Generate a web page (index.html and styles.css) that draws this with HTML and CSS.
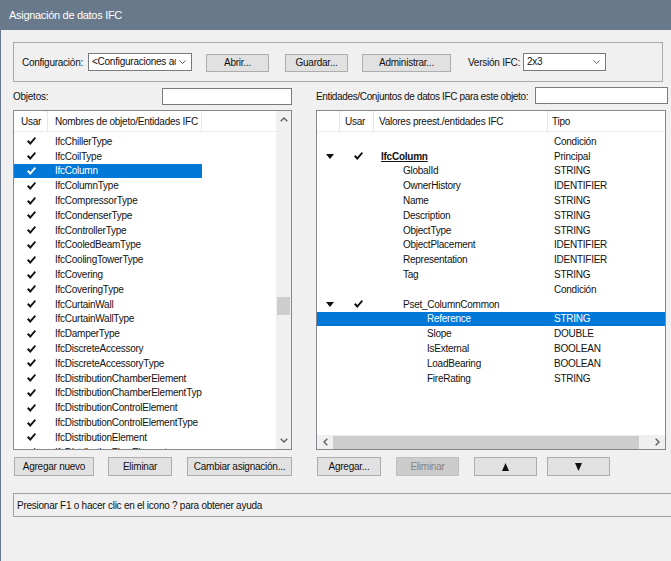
FILE: index.html
```html
<!DOCTYPE html>
<html>
<head>
<meta charset="utf-8">
<title>Asignación de datos IFC</title>
<link rel="stylesheet" href="styles.css">
</head>
<body>
<div class="window">
  <div class="titlebar">Asignación de datos IFC</div>
  <div class="content">
    <div class="group">
      <span class="lbl lbl-config">Configuración:</span>
      <div class="select sel-config"><span class="sel-text">&lt;Configuraciones actuales&gt;</span><svg class="chev" width="7" height="4" viewBox="0 0 7 4"><polyline points="0.5,0.5 3.5,3.5 6.5,0.5" fill="none" stroke="#606060" stroke-width="1"/></svg></div>
      <button class="btn btn-abrir">Abrir...</button>
      <button class="btn btn-guardar">Guardar...</button>
      <button class="btn btn-admin">Administrar...</button>
      <span class="lbl lbl-version">Versión IFC:</span>
      <div class="select sel-version"><span class="sel-text">2x3</span><svg class="chev" width="7" height="4" viewBox="0 0 7 4"><polyline points="0.5,0.5 3.5,3.5 6.5,0.5" fill="none" stroke="#606060" stroke-width="1"/></svg></div>
    </div>

    <div class="panes">
      <div class="pane pane-left">
        <div class="filter-row">
          <span class="lbl">Objetos:</span>
          <div class="input in-left"></div>
        </div>
        <div class="list list-left">
          <div class="list-main">
            <div class="header">
              <div class="hcell lc-use">Usar</div>
              <div class="hcell lc-name">Nombres de objeto/Entidades IFC</div>
            </div>
            <div class="rows">
              <div class="row lrow"><div class="lc-use"><svg class="check" width="9" height="8" viewBox="0 0 9 8"><path d="M0 4.4 L1.5 3 L3.3 4.9 L7.7 0 L9 1.3 L3.3 8 Z"/></svg></div><div class="lc-name">IfcChillerType</div></div>
              <div class="row lrow"><div class="lc-use"><svg class="check" width="9" height="8" viewBox="0 0 9 8"><path d="M0 4.4 L1.5 3 L3.3 4.9 L7.7 0 L9 1.3 L3.3 8 Z"/></svg></div><div class="lc-name">IfcCoilType</div></div>
              <div class="row lrow selected"><div class="lc-use"><svg class="check" width="9" height="8" viewBox="0 0 9 8"><path d="M0 4.4 L1.5 3 L3.3 4.9 L7.7 0 L9 1.3 L3.3 8 Z"/></svg></div><div class="lc-name">IfcColumn</div></div>
              <div class="row lrow"><div class="lc-use"><svg class="check" width="9" height="8" viewBox="0 0 9 8"><path d="M0 4.4 L1.5 3 L3.3 4.9 L7.7 0 L9 1.3 L3.3 8 Z"/></svg></div><div class="lc-name">IfcColumnType</div></div>
              <div class="row lrow"><div class="lc-use"><svg class="check" width="9" height="8" viewBox="0 0 9 8"><path d="M0 4.4 L1.5 3 L3.3 4.9 L7.7 0 L9 1.3 L3.3 8 Z"/></svg></div><div class="lc-name">IfcCompressorType</div></div>
              <div class="row lrow"><div class="lc-use"><svg class="check" width="9" height="8" viewBox="0 0 9 8"><path d="M0 4.4 L1.5 3 L3.3 4.9 L7.7 0 L9 1.3 L3.3 8 Z"/></svg></div><div class="lc-name">IfcCondenserType</div></div>
              <div class="row lrow"><div class="lc-use"><svg class="check" width="9" height="8" viewBox="0 0 9 8"><path d="M0 4.4 L1.5 3 L3.3 4.9 L7.7 0 L9 1.3 L3.3 8 Z"/></svg></div><div class="lc-name">IfcControllerType</div></div>
              <div class="row lrow"><div class="lc-use"><svg class="check" width="9" height="8" viewBox="0 0 9 8"><path d="M0 4.4 L1.5 3 L3.3 4.9 L7.7 0 L9 1.3 L3.3 8 Z"/></svg></div><div class="lc-name">IfcCooledBeamType</div></div>
              <div class="row lrow"><div class="lc-use"><svg class="check" width="9" height="8" viewBox="0 0 9 8"><path d="M0 4.4 L1.5 3 L3.3 4.9 L7.7 0 L9 1.3 L3.3 8 Z"/></svg></div><div class="lc-name">IfcCoolingTowerType</div></div>
              <div class="row lrow"><div class="lc-use"><svg class="check" width="9" height="8" viewBox="0 0 9 8"><path d="M0 4.4 L1.5 3 L3.3 4.9 L7.7 0 L9 1.3 L3.3 8 Z"/></svg></div><div class="lc-name">IfcCovering</div></div>
              <div class="row lrow"><div class="lc-use"><svg class="check" width="9" height="8" viewBox="0 0 9 8"><path d="M0 4.4 L1.5 3 L3.3 4.9 L7.7 0 L9 1.3 L3.3 8 Z"/></svg></div><div class="lc-name">IfcCoveringType</div></div>
              <div class="row lrow"><div class="lc-use"><svg class="check" width="9" height="8" viewBox="0 0 9 8"><path d="M0 4.4 L1.5 3 L3.3 4.9 L7.7 0 L9 1.3 L3.3 8 Z"/></svg></div><div class="lc-name">IfcCurtainWall</div></div>
              <div class="row lrow"><div class="lc-use"><svg class="check" width="9" height="8" viewBox="0 0 9 8"><path d="M0 4.4 L1.5 3 L3.3 4.9 L7.7 0 L9 1.3 L3.3 8 Z"/></svg></div><div class="lc-name">IfcCurtainWallType</div></div>
              <div class="row lrow"><div class="lc-use"><svg class="check" width="9" height="8" viewBox="0 0 9 8"><path d="M0 4.4 L1.5 3 L3.3 4.9 L7.7 0 L9 1.3 L3.3 8 Z"/></svg></div><div class="lc-name">IfcDamperType</div></div>
              <div class="row lrow"><div class="lc-use"><svg class="check" width="9" height="8" viewBox="0 0 9 8"><path d="M0 4.4 L1.5 3 L3.3 4.9 L7.7 0 L9 1.3 L3.3 8 Z"/></svg></div><div class="lc-name">IfcDiscreteAccessory</div></div>
              <div class="row lrow"><div class="lc-use"><svg class="check" width="9" height="8" viewBox="0 0 9 8"><path d="M0 4.4 L1.5 3 L3.3 4.9 L7.7 0 L9 1.3 L3.3 8 Z"/></svg></div><div class="lc-name">IfcDiscreteAccessoryType</div></div>
              <div class="row lrow"><div class="lc-use"><svg class="check" width="9" height="8" viewBox="0 0 9 8"><path d="M0 4.4 L1.5 3 L3.3 4.9 L7.7 0 L9 1.3 L3.3 8 Z"/></svg></div><div class="lc-name">IfcDistributionChamberElement</div></div>
              <div class="row lrow"><div class="lc-use"><svg class="check" width="9" height="8" viewBox="0 0 9 8"><path d="M0 4.4 L1.5 3 L3.3 4.9 L7.7 0 L9 1.3 L3.3 8 Z"/></svg></div><div class="lc-name">IfcDistributionChamberElementType</div></div>
              <div class="row lrow"><div class="lc-use"><svg class="check" width="9" height="8" viewBox="0 0 9 8"><path d="M0 4.4 L1.5 3 L3.3 4.9 L7.7 0 L9 1.3 L3.3 8 Z"/></svg></div><div class="lc-name">IfcDistributionControlElement</div></div>
              <div class="row lrow"><div class="lc-use"><svg class="check" width="9" height="8" viewBox="0 0 9 8"><path d="M0 4.4 L1.5 3 L3.3 4.9 L7.7 0 L9 1.3 L3.3 8 Z"/></svg></div><div class="lc-name">IfcDistributionControlElementType</div></div>
              <div class="row lrow"><div class="lc-use"><svg class="check" width="9" height="8" viewBox="0 0 9 8"><path d="M0 4.4 L1.5 3 L3.3 4.9 L7.7 0 L9 1.3 L3.3 8 Z"/></svg></div><div class="lc-name">IfcDistributionElement</div></div>
              <div class="row lrow"><div class="lc-use"><svg class="check" width="9" height="8" viewBox="0 0 9 8"><path d="M0 4.4 L1.5 3 L3.3 4.9 L7.7 0 L9 1.3 L3.3 8 Z"/></svg></div><div class="lc-name">IfcDistributionFlowElement</div></div>
            </div>
          </div>
          <div class="vscroll">
            <div class="sb-btn sb-up"><svg width="8" height="5" viewBox="0 0 8 5"><polyline points="0.7,4.3 4,1 7.3,4.3" fill="none" stroke="#606060" stroke-width="1.4"/></svg></div>
            <div class="sb-track"><div class="sb-thumb-v"></div></div>
            <div class="sb-btn sb-down"><svg width="8" height="5" viewBox="0 0 8 5"><polyline points="0.7,0.7 4,4 7.3,0.7" fill="none" stroke="#606060" stroke-width="1.4"/></svg></div>
          </div>
        </div>
        <div class="btn-row">
          <button class="btn b-agregar-nuevo">Agregar nuevo</button>
          <button class="btn b-eliminar-l">Eliminar</button>
          <button class="btn b-cambiar">Cambiar asignación...</button>
        </div>
      </div>

      <div class="pane pane-right">
        <div class="filter-row">
          <span class="lbl lbl-entities">Entidades/Conjuntos de datos IFC para este objeto:</span>
          <div class="input in-right"></div>
        </div>
        <div class="list list-right">
          <div class="header">
            <div class="hcell rc-tog"></div>
            <div class="hcell rc-use">Usar</div>
            <div class="hcell rc-name">Valores preest./entidades IFC</div>
            <div class="hcell rc-type">Tipo</div>
          </div>
          <div class="rows">
            <div class="row rrow"><div class="rc-tog"></div><div class="rc-use"></div><div class="rc-name"></div><div class="rc-type">Condición</div></div>
            <div class="row rrow"><div class="rc-tog"><svg class="tri" width="8" height="5" viewBox="0 0 8 5"><polygon points="0,0 8,0 4,5"/></svg></div><div class="rc-use"><svg class="check" width="9" height="8" viewBox="0 0 9 8"><path d="M0 4.4 L1.5 3 L3.3 4.9 L7.7 0 L9 1.3 L3.3 8 Z"/></svg></div><div class="rc-name lv0 entity">IfcColumn</div><div class="rc-type">Principal</div></div>
            <div class="row rrow"><div class="rc-tog"></div><div class="rc-use"></div><div class="rc-name lv1">GlobalId</div><div class="rc-type">STRING</div></div>
            <div class="row rrow"><div class="rc-tog"></div><div class="rc-use"></div><div class="rc-name lv1">OwnerHistory</div><div class="rc-type">IDENTIFIER</div></div>
            <div class="row rrow"><div class="rc-tog"></div><div class="rc-use"></div><div class="rc-name lv1">Name</div><div class="rc-type">STRING</div></div>
            <div class="row rrow"><div class="rc-tog"></div><div class="rc-use"></div><div class="rc-name lv1">Description</div><div class="rc-type">STRING</div></div>
            <div class="row rrow"><div class="rc-tog"></div><div class="rc-use"></div><div class="rc-name lv1">ObjectType</div><div class="rc-type">STRING</div></div>
            <div class="row rrow"><div class="rc-tog"></div><div class="rc-use"></div><div class="rc-name lv1">ObjectPlacement</div><div class="rc-type">IDENTIFIER</div></div>
            <div class="row rrow"><div class="rc-tog"></div><div class="rc-use"></div><div class="rc-name lv1">Representation</div><div class="rc-type">IDENTIFIER</div></div>
            <div class="row rrow"><div class="rc-tog"></div><div class="rc-use"></div><div class="rc-name lv1">Tag</div><div class="rc-type">STRING</div></div>
            <div class="row rrow"><div class="rc-tog"></div><div class="rc-use"></div><div class="rc-name"></div><div class="rc-type">Condición</div></div>
            <div class="row rrow"><div class="rc-tog"><svg class="tri" width="8" height="5" viewBox="0 0 8 5"><polygon points="0,0 8,0 4,5"/></svg></div><div class="rc-use"><svg class="check" width="9" height="8" viewBox="0 0 9 8"><path d="M0 4.4 L1.5 3 L3.3 4.9 L7.7 0 L9 1.3 L3.3 8 Z"/></svg></div><div class="rc-name lv1">Pset_ColumnCommon</div><div class="rc-type"></div></div>
            <div class="row rrow selected"><div class="rc-tog"></div><div class="rc-use"></div><div class="rc-name lv2">Reference</div><div class="rc-type">STRING</div></div>
            <div class="row rrow"><div class="rc-tog"></div><div class="rc-use"></div><div class="rc-name lv2">Slope</div><div class="rc-type">DOUBLE</div></div>
            <div class="row rrow"><div class="rc-tog"></div><div class="rc-use"></div><div class="rc-name lv2">IsExternal</div><div class="rc-type">BOOLEAN</div></div>
            <div class="row rrow"><div class="rc-tog"></div><div class="rc-use"></div><div class="rc-name lv2">LoadBearing</div><div class="rc-type">BOOLEAN</div></div>
            <div class="row rrow"><div class="rc-tog"></div><div class="rc-use"></div><div class="rc-name lv2">FireRating</div><div class="rc-type">STRING</div></div>
          </div>
          <div class="hscroll">
            <div class="sb-btn-h"><svg width="5" height="8" viewBox="0 0 5 8"><polyline points="4.3,0.7 1,4 4.3,7.3" fill="none" stroke="#606060" stroke-width="1.4"/></svg></div>
            <div class="sb-track-h"><div class="sb-thumb-h"></div></div>
            <div class="sb-btn-h"><svg width="5" height="8" viewBox="0 0 5 8"><polyline points="0.7,0.7 4,4 0.7,7.3" fill="none" stroke="#606060" stroke-width="1.4"/></svg></div>
          </div>
        </div>
        <div class="btn-row">
          <button class="btn b-agregar">Agregar...</button>
          <button class="btn b-eliminar-r disabled">Eliminar</button>
          <button class="btn b-up"><svg width="7" height="8" viewBox="0 0 7 8"><polygon points="3.5,0 7,8 0,8"/></svg></button>
          <button class="btn b-down"><svg width="7" height="8" viewBox="0 0 7 8"><polygon points="0,0 7,0 3.5,8"/></svg></button>
        </div>
      </div>
    </div>

    <div class="status">Presionar F1 o hacer clic en el icono ? para obtener ayuda</div>
  </div>
</div>
</body>
</html>
```

FILE: styles.css
```css
* { box-sizing: border-box; }

html, body {
  margin: 0;
  padding: 0;
  background: #f0f0f0;
}

body {
  font-family: "Liberation Sans", Arial, sans-serif;
  font-size: 10px;
  letter-spacing: -0.25px;
  color: #111;
}

.window {
  width: 671px;
  height: 561px;
  background: #f0f0f0;
  border-left: 1px solid #68798b;
  overflow: hidden;
}

.titlebar {
  height: 30px;
  line-height: 30px;
  background: #68798b;
  color: #fff;
  font-size: 11px;
  letter-spacing: -0.3px;
  padding-left: 8px;
}

.content {
  padding-left: 12px;
}

/* ---------- configuration group ---------- */
.group {
  margin-top: 12px;
  width: 650px;
  height: 40px;
  border: 1px solid #a9a9a9;
  display: flex;
  align-items: center;
  padding-left: 8px;
}

.lbl { white-space: nowrap; }
.lbl-config { width: 66px; }
.lbl-version { width: 55px; margin-left: 17px; }
.lbl-entities { letter-spacing: -0.35px; }

.select {
  height: 18px;
  background: #fff;
  border: 1px solid #7a7a7a;
  display: flex;
  align-items: center;
  padding-left: 3px;
  padding-right: 5px;
  margin-top: -1px;
}
.sel-text {
  flex: 1;
  overflow: hidden;
  white-space: nowrap;
}
.chev { flex: none; margin-left: 3px; }
.sel-config { width: 104px; }
.sel-version { width: 83px; }

.btn {
  font-family: inherit;
  font-size: 10px;
  letter-spacing: -0.25px;
  color: #111;
  background: #e1e1e1;
  border: 1px solid #adadad;
  padding: 0;
  margin: 0;
  height: 19px;
  display: flex;
  align-items: center;
  justify-content: center;
  white-space: nowrap;
}
.btn.disabled {
  background: #cccccc;
  border-color: #bfbfbf;
  color: #838383;
}

.group .btn { height: 18px; margin-top: 1px; }
.btn-abrir { width: 63px; margin-left: 14px; }
.btn-guardar { width: 63px; margin-left: 16px; }
.btn-admin { width: 89px; margin-left: 14px; }

/* ---------- panes ---------- */
.panes {
  display: flex;
  margin-top: 6px;
}
.pane-left { width: 279px; }
.pane-right { width: 355px; margin-left: 24px; }

.filter-row {
  height: 17px;
  display: flex;
  align-items: center;
  justify-content: space-between;
}
.input {
  height: 17px;
  background: #fff;
  border: 1px solid #7a7a7a;
}
.in-left { width: 130px; }
.in-right { width: 133px; margin-top: -2px; margin-right: 3px; }

.list {
  margin-top: 5px;
  height: 340px;
  background: #fff;
  border: 1px solid #828790;
}
.list-left {
  width: 279px;
  display: flex;
}
.list-right {
  width: 350px;
  display: flex;
  flex-direction: column;
}

.list-main {
  flex: 1;
  display: flex;
  flex-direction: column;
  overflow: hidden;
}

.header {
  height: 21px;
  flex: none;
  display: flex;
  background: #fff;
  border-bottom: 1px solid #ececec;
}
.hcell {
  height: 100%;
  display: flex;
  align-items: center;
  border-right: 1px solid #e5e5e5;
  white-space: nowrap;
  overflow: hidden;
}

.rows {
  flex: 1;
  overflow: hidden;
  padding-top: 2px;
}
.row {
  height: 14.8px;
  display: flex;
  align-items: center;
  white-space: nowrap;
}
.row > div {
  height: 100%;
  display: flex;
  align-items: center;
  overflow: hidden;
}
.row.selected {
  background: #0078d7;
  color: #fff;
}
.check { fill: #111; }
.row.selected .check { fill: #fff; }

/* left list columns */
.lc-use { width: 34px; justify-content: center; }
.hcell.lc-use { justify-content: flex-start; padding-left: 7px; }
.lc-name { width: 154px; padding-left: 7px; }
.lrow { width: 188px; }
.lrow .lc-use { padding-left: 1px; }

/* left vertical scrollbar */
.vscroll {
  width: 15px;
  flex: none;
  background: #f0f0f0;
  display: flex;
  flex-direction: column;
}
.sb-btn {
  height: 17px;
  display: flex;
  align-items: center;
  justify-content: center;
}
.sb-track { flex: 1; }
.sb-thumb-v {
  margin-top: 169px;
  margin-left: 1px;
  width: 13px;
  height: 18px;
  background: #cdcdcd;
}

/* right list columns */
.rc-tog { width: 23px; justify-content: center; }
.rc-use { width: 34px; justify-content: center; }
.hcell.rc-use { justify-content: flex-start; padding-left: 5px; }
.rc-name { width: 174px; }
.hcell.rc-name { padding-left: 5px; }
.rc-type { flex: 1; padding-left: 6px; }
.hcell.rc-type { padding-left: 4px; border-right: none; }
.rrow .rc-tog { padding-left: 2px; }
.rrow .rc-use { padding-left: 3px; }
.lv0 { padding-left: 7px; }
.lv1 { padding-left: 29px; }
.lv2 { padding-left: 53px; }
.entity {
  font-weight: bold;
  text-decoration: underline;
}
.tri { fill: #111; }

/* right horizontal scrollbar */
.hscroll {
  height: 14px;
  flex: none;
  background: #f0f0f0;
  display: flex;
}
.sb-btn-h {
  width: 16px;
  display: flex;
  align-items: center;
  justify-content: center;
}
.sb-track-h { flex: 1; display: flex; align-items: center; }
.sb-thumb-h {
  width: 306px;
  height: 13px;
  background: #cdcdcd;
}

/* button rows */
.btn-row {
  display: flex;
  margin-top: 7px;
}
.b-agregar-nuevo { width: 80px; margin-left: 1px; }
.b-eliminar-l { width: 64px; margin-left: 14px; }
.b-cambiar { width: 105px; margin-left: 15px; }
.b-agregar { width: 64px; margin-left: 1px; }
.b-eliminar-r { width: 63px; margin-left: 15px; }
.b-up { width: 63px; margin-left: 15px; }
.b-down { width: 63px; margin-left: 10px; }
.b-up svg, .b-down svg { fill: #111; }

/* status bar */
.status {
  margin-top: 17px;
  height: 24px;
  width: 700px;
  border-top: 1px solid #a0a0a0;
  border-bottom: 1px solid #a0a0a0;
  border-left: 1px solid #a0a0a0;
  display: flex;
  align-items: center;
  padding-left: 3px;
}
```
